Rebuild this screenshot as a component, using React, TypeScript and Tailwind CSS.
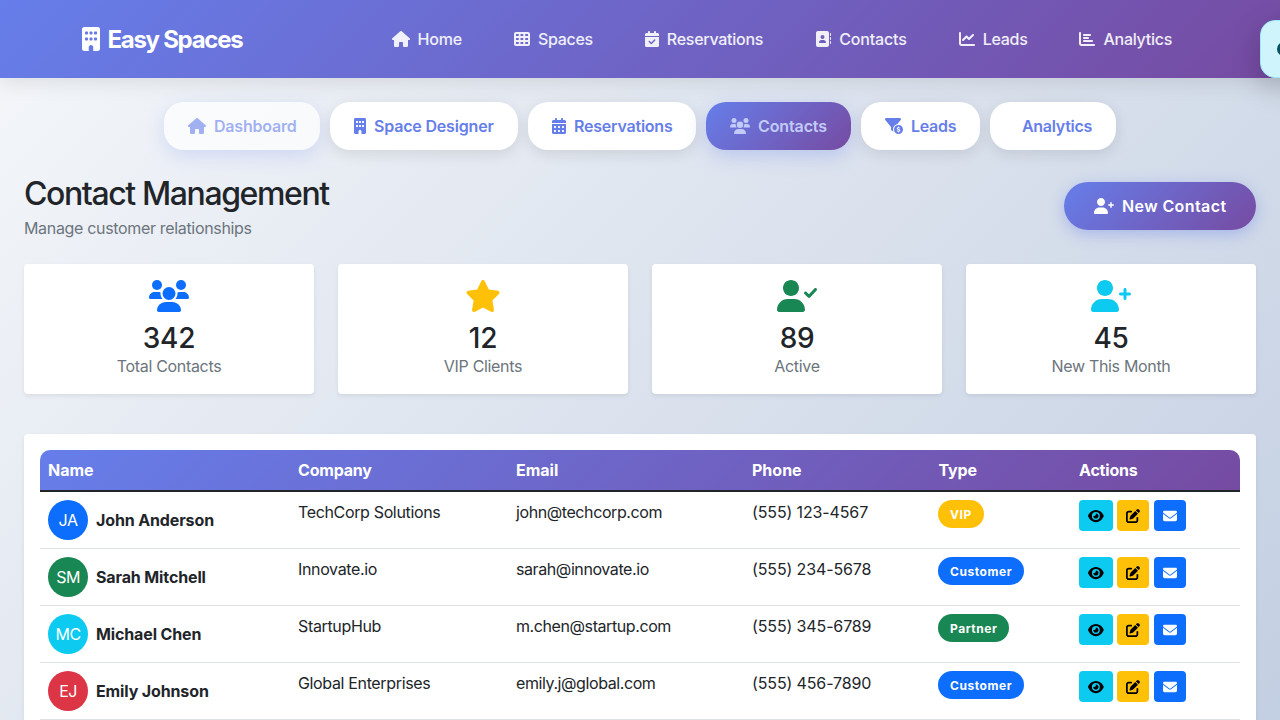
import React from "react";
import {
  FaAddressBook,
  FaBuilding,
  FaCalendarCheck,
  FaCalendarDays,
  FaChartBar,
  FaChartLine,
  FaEnvelope,
  FaEye,
  FaFilterCircleDollar,
  FaHouse,
  FaPenToSquare,
  FaStar,
  FaTableCells,
} from "react-icons/fa6";

type IconComponent = React.ComponentType<{ className?: string }>;

const personBody =
  "M224 256c70.7 0 128-57.31 128-128S294.7 0 224 0C153.3 0 96 57.31 96 128S153.3 256 224 256zM274.7 304H173.3C77.61 304 0 381.6 0 477.3C0 496.5 15.52 512 34.66 512h378.7C432.5 512 448 496.5 448 477.3C448 381.6 370.4 304 274.7 304z";

function UserPlusIcon({ className }: { className?: string }) {
  return (
    <svg viewBox="0 0 640 512" fill="currentColor" className={className}>
      <path d={personBody} />
      <path d="M616 200h-48v-48C568 138.8 557.3 128 544 128s-24 10.75-24 24v48h-48C458.8 200 448 210.8 448 224s10.75 24 24 24h48v48C520 309.3 530.8 320 544 320s24-10.75 24-24v-48h48C629.3 248 640 237.3 640 224S629.3 200 616 200z" />
    </svg>
  );
}

function UserCheckIcon({ className }: { className?: string }) {
  return (
    <svg viewBox="0 0 640 512" fill="currentColor" className={className}>
      <path d={personBody} />
      <path d="M632.3 134.4c-9.703-9-24.91-8.453-33.92 1.266l-87.05 93.75l-38.39-38.39c-9.375-9.375-24.56-9.375-33.94 0s-9.375 24.56 0 33.94l56 56C499.5 285.5 505.6 288 512 288h.4375c6.531-.125 12.72-2.891 17.16-7.672l104-112C642.6 158.6 642 143.4 632.3 134.4z" />
    </svg>
  );
}

function UsersIcon({ className }: { className?: string }) {
  return (
    <svg viewBox="0 0 640 512" fill="currentColor" className={className}>
      <circle cx="320" cy="216" r="104" />
      <circle cx="128" cy="80" r="80" />
      <circle cx="512" cy="80" r="80" />
      <path d="M369.9 352H270.1C191.6 352 128 411.7 128 485.3C128 500.1 140.7 512 156.4 512h327.2C499.3 512 512 500.1 512 485.3C512 411.7 448.4 352 369.9 352z" />
      <path d="M183.9 216c0-5.449 .9824-10.63 1.609-15.91C174.6 194.1 162.6 192 149.9 192H88.08C39.44 192 0 233.8 0 285.3C0 295.8 7.887 304 17.62 304h199.5C196.7 280.2 183.9 249.7 183.9 216z" />
      <path d="M551.9 192h-61.84c-12.8 0-24.88 3.037-35.86 8.24C454.8 205.5 455.8 210.6 455.8 216c0 33.71-12.78 64.21-33.16 88h199.7C632.1 304 640 295.8 640 285.3C640 233.8 600.6 192 551.9 192z" />
    </svg>
  );
}

type NavItem = { label: string; Icon: IconComponent; size: string; tracking: string };

const navItems: NavItem[] = [
  { label: "Home", Icon: FaHouse, size: "w-[18px]", tracking: "tracking-[-0.2px]" },
  { label: "Spaces", Icon: FaTableCells, size: "w-4", tracking: "tracking-[-0.3px]" },
  { label: "Reservations", Icon: FaCalendarCheck, size: "w-3.5", tracking: "tracking-[-0.27px]" },
  { label: "Contacts", Icon: FaAddressBook, size: "w-4", tracking: "tracking-[-0.15px]" },
  { label: "Leads", Icon: FaChartLine, size: "w-4", tracking: "tracking-[-0.3px]" },
  { label: "Analytics", Icon: FaChartBar, size: "w-4", tracking: "tracking-[-0.27px]" },
];

type Tab = { label: string; Icon?: IconComponent; size?: string; box: string; text: string };

const plainTab = "bg-white text-[#667eea] shadow-[0_4px_15px_rgba(0,0,0,0.1)]";

const tabs: Tab[] = [
  {
    label: "Dashboard",
    Icon: FaHouse,
    size: "w-[18px]",
    box: "w-[156px] bg-white/70 text-[#667eea]/60 shadow-[0_6px_20px_rgba(102,126,234,0.2)]",
    text: "tracking-[-0.2px]",
  },
  {
    label: "Space Designer",
    Icon: FaBuilding,
    size: "w-3",
    box: `w-[188px] ${plainTab}`,
    text: "tracking-[-0.18px]",
  },
  {
    label: "Reservations",
    Icon: FaCalendarDays,
    size: "w-3.5",
    box: `w-[168px] ${plainTab}`,
    text: "tracking-[-0.22px]",
  },
  {
    label: "Contacts",
    Icon: UsersIcon,
    size: "w-5",
    box: "w-[145px] bg-[linear-gradient(135deg,#667eea_0%,#764ba2_100%)] text-[#c2cbf7] shadow-[0_6px_20px_rgba(102,126,234,0.3)]",
    text: "tracking-[-0.12px]",
  },
  {
    label: "Leads",
    Icon: FaFilterCircleDollar,
    size: "w-[18px]",
    box: `w-[119px] ${plainTab}`,
    text: "tracking-[-0.3px]",
  },
  { label: "Analytics", box: `w-[126px] ${plainTab}`, text: "tracking-[-0.28px]" },
];

const stats = [
  { value: "342", label: "Total Contacts", Icon: UsersIcon, look: "w-10 text-[#0d6efd]" },
  { value: "12", label: "VIP Clients", Icon: FaStar, look: "w-9 text-[#ffc107]" },
  { value: "89", label: "Active", Icon: UserCheckIcon, look: "w-10 text-[#198754]" },
  { value: "45", label: "New This Month", Icon: UserPlusIcon, look: "w-10 text-[#0dcaf0]" },
];

const columns = [
  { label: "Name", tracking: "" },
  { label: "Company", tracking: "tracking-[-0.2px]" },
  { label: "Email", tracking: "" },
  { label: "Phone", tracking: "" },
  { label: "Type", tracking: "tracking-[-0.1px]" },
  { label: "Actions", tracking: "tracking-[-0.2px]" },
];

const contacts = [
  {
    initials: "JA",
    avatar: "bg-[#0d6efd]",
    name: "John Anderson",
    company: "TechCorp Solutions",
    email: "john@techcorp.com",
    phone: "(555) 123-4567",
    type: "VIP",
    badge: "bg-[#ffc107]",
  },
  {
    initials: "SM",
    avatar: "bg-[#198754]",
    name: "Sarah Mitchell",
    company: "Innovate.io",
    email: "sarah@innovate.io",
    phone: "(555) 234-5678",
    type: "Customer",
    badge: "bg-[#0d6efd]",
  },
  {
    initials: "MC",
    avatar: "bg-[#0dcaf0]",
    name: "Michael Chen",
    company: "StartupHub",
    email: "m.chen@startup.com",
    phone: "(555) 345-6789",
    type: "Partner",
    badge: "bg-[#198754]",
  },
  {
    initials: "EJ",
    avatar: "bg-[#dc3545]",
    name: "Emily Johnson",
    company: "Global Enterprises",
    email: "emily.j@global.com",
    phone: "(555) 456-7890",
    type: "Customer",
    badge: "bg-[#0d6efd]",
  },
];

const gridCols = "grid grid-cols-[250px_218px_236px_186.5px_140.5px_1fr]";

function Header() {
  return (
    <header className="relative z-10 h-[78px] shrink-0 bg-[linear-gradient(135deg,#667eea_0%,#764ba2_100%)] shadow-[0_4px_20px_rgba(0,0,0,0.1)]">
      <div className="mx-auto flex h-full w-[1140px] items-center justify-between px-3">
        <a className="flex items-center gap-[7.5px] text-2xl font-bold text-white">
          <FaBuilding className="h-6 w-[18px]" />
          <span className="pt-0.5 tracking-[-1.28px]">Easy Spaces</span>
        </a>
        <nav className="flex items-center">
          {navItems.map(({ label, Icon, size, tracking }) => (
            <a key={label} className="flex items-center gap-2 px-[26px] font-medium text-white/90">
              <Icon className={`h-4 ${size}`} />
              <span className={tracking}>{label}</span>
            </a>
          ))}
        </nav>
      </div>
    </header>
  );
}

function Tabs() {
  return (
    <div className="flex justify-center gap-2.5">
      {tabs.map(({ label, Icon, size, box, text }) => (
        <button
          key={label}
          className={`flex h-12 items-center gap-2 rounded-[20px] pl-6 font-semibold whitespace-nowrap ${box}`}
        >
          {Icon ? <Icon className={`h-4 shrink-0 ${size}`} /> : <span className="w-0" />}
          <span className={text}>{label}</span>
        </button>
      ))}
    </div>
  );
}

function StatCards() {
  return (
    <div className="mt-6 grid grid-cols-4 gap-6">
      {stats.map(({ value, label, Icon, look }) => (
        <div
          key={label}
          className="flex h-[130px] flex-col items-center rounded bg-white pt-4 shadow-[0_2px_4px_rgba(0,0,0,0.075)]"
        >
          <Icon className={`h-8 ${look}`} />
          <div className="mt-[9px] text-[28px] leading-[34px] font-medium tracking-[-0.3px]">{value}</div>
          <div className="-mt-px leading-6 tracking-[-0.32px] text-[#6c757d]">{label}</div>
        </div>
      ))}
    </div>
  );
}

function ContactTable() {
  return (
    <section className="mt-10 h-[360px] rounded bg-white p-4 shadow-[0_2px_4px_rgba(0,0,0,0.075)]">
      <div
        className={`${gridCols} h-[42px] rounded-t-[10px] border-b-2 border-[#212529] bg-[linear-gradient(135deg,#667eea_0%,#764ba2_100%)] font-bold text-white`}
      >
        {columns.map(({ label, tracking }) => (
          <div key={label} className={`px-2 pt-2 leading-6 ${tracking}`}>
            {label}
          </div>
        ))}
      </div>
      {contacts.map((c) => (
        <div key={c.name} className={`${gridCols} h-[57px] border-b border-[#dee2e6]`}>
          <div className="flex items-center gap-2 px-2">
            <div
              className={`flex size-10 items-center justify-center rounded-full tracking-[-0.5px] text-white ${c.avatar}`}
            >
              {c.initials}
            </div>
            <span className="font-bold tracking-[-0.13px]">{c.name}</span>
          </div>
          <div className="p-2 tracking-[-0.35px]">{c.company}</div>
          <div className="p-2 tracking-[-0.41px]">{c.email}</div>
          <div className="p-2 tracking-[-0.13px]">{c.phone}</div>
          <div className="px-[7.5px] py-2">
            <span
              className={`inline-flex h-7 items-center rounded-[20px] px-3 pt-px text-xs font-bold tracking-[0.55px] text-white ${c.badge}`}
            >
              {c.type}
            </span>
          </div>
          <div className="flex gap-[4.4px] p-2">
            <button className="flex h-[31px] w-[33.75px] items-center justify-center rounded bg-[#0dcaf0] text-black">
              <FaEye className="h-3.5 w-[15.75px]" />
            </button>
            <button className="flex h-[31px] w-8 items-center justify-center rounded bg-[#ffc107] text-black">
              <FaPenToSquare className="size-3.5" />
            </button>
            <button className="flex h-[31px] w-8 items-center justify-center rounded bg-[#0d6efd] text-white">
              <FaEnvelope className="size-3.5" />
            </button>
          </div>
        </div>
      ))}
    </section>
  );
}

export default function App() {
  return (
    <div className="relative flex h-[720px] w-[1280px] flex-col overflow-hidden bg-[linear-gradient(135deg,#f5f7fa_0%,#c3cfe2_100%)] font-['Inter',sans-serif] text-base leading-6 text-[#212529]">
      <Header />
      <main className="px-6 pt-6">
        <Tabs />
        <div className="mt-6 flex items-start justify-between">
          <div>
            <h2 className="pt-px text-[32px] leading-[38px] font-medium tracking-[-1.4px]">Contact Management</h2>
            <p className="mt-[3px] tracking-[-0.33px] text-[#6c757d]">Manage customer relationships</p>
          </div>
          <button className="mt-2 flex h-12 w-48 items-center gap-2 rounded-[25px] bg-[linear-gradient(135deg,#667eea_0%,#764ba2_100%)] pl-[30px] font-semibold tracking-[0.4px] whitespace-nowrap text-white shadow-[0_4px_15px_rgba(102,126,234,0.4)]">
            <UserPlusIcon className="h-4 w-5 shrink-0" />
            New Contact
          </button>
        </div>
        <StatCards />
        <ContactTable />
      </main>
      <div className="absolute top-5 left-[1260px] z-20 flex h-[58px] w-[300px] items-center rounded-[15px] border border-[#9eeaf9] bg-[#cff4fc] pl-4 text-[#055160] shadow-[0_10px_30px_rgba(0,0,0,0.2)]">
        <span className="h-3.5 w-4 rounded-full bg-[#055160]" />
      </div>
    </div>
  );
}
